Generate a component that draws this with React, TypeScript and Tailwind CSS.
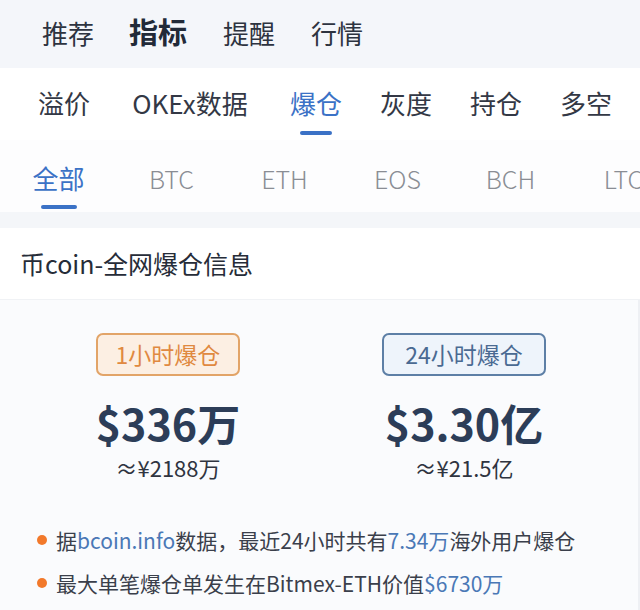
const font = { fontFamily: '"Noto Sans CJK SC", "Noto Sans", sans-serif' };

const topTabs = [
  { label: '推荐', w: 'w-[53px]' },
  { label: '指标', active: true, w: 'w-[60px]' },
  { label: '提醒', w: 'w-[54px]' },
  { label: '行情', w: 'w-[53px]' },
];

const subTabs = [
  { label: '溢价', w: 'w-[52px]' },
  { label: 'OKEx数据', w: 'w-[124px]' },
  { label: '爆仓', w: 'w-[52px]' },
  { label: '灰度', w: 'w-[52px]' },
  { label: '持仓', w: 'w-[52px]' },
  { label: '多空', w: 'w-[52px]' },
];
const coins = ['全部', 'BTC', 'ETH', 'EOS', 'BCH', 'LTC'];

export default function App() {
  return (
    <div className="w-[640px] h-[610px] overflow-hidden bg-white text-[#2f3440] font-['Noto_Sans_CJK_SC',sans-serif]">
      {/* top nav */}
      <div className="h-[68px] bg-[#f4f6fa] flex items-center pb-[4px] pl-[42px] gap-[34px] text-[26px] text-[#2d3340] whitespace-nowrap">
        {topTabs.map(t => (
          <span key={t.label} className={`${t.w} ${t.active ? 'font-bold text-[29px] text-[#222a38]' : ''}`}>{t.label}</span>
        ))}
      </div>

      {/* sub nav */}
      <div className="h-[72px] bg-white flex pl-[38px] gap-[38px] text-[26px] text-[#333845] whitespace-nowrap">
        {subTabs.map(t => (
          <div key={t.label} className={`${t.w} shrink-0 flex flex-col items-center pt-[17px]`}>
            <span className={t.label === '爆仓' ? 'text-[#3b72c6] leading-[36px]' : 'leading-[36px]'}>{t.label}</span>
            {t.label === '爆仓' && <span className="mt-[10px] w-[32px] h-[4px] rounded-full bg-[#3b72c6]" />}
          </div>
        ))}
      </div>

      {/* coin tabs */}
      <div className="h-[72px] bg-[#fdfdfe] flex pl-[2px] whitespace-nowrap">
        {coins.map((c, i) => (
          <div key={c} className="w-[113px] shrink-0 flex flex-col items-center pt-[21px]">
            <span className={i === 0 ? 'text-[26px] leading-[34px] text-[#3b72c6]' : 'text-[25px] leading-[34px] text-[#8a8d94] font-light'}>{c}</span>
            {i === 0 && <span className="mt-[10px] w-[36px] h-[4px] rounded-full bg-[#3b72c6]" />}
          </div>
        ))}
      </div>

      <div className="h-[16px] bg-[#f4f6f9]" />

      {/* title */}
      <div className="h-[72px] flex items-center pl-[20px] text-[25px] text-[#262c38] bg-white border-b border-[#f0f2f5]">
        币coin-全网爆仓信息
      </div>

      {/* card */}
      <div className="bg-[#fafbfd] border-r-2 border-[#eef0f4] h-[400px]" style={font}>
        <div className="grid grid-cols-2 w-[592px] ml-[20px] pt-[33px]">
          <div className="flex flex-col items-center">
            <div className="w-[144px] h-[43px] rounded-[7px] border-2 border-[#e2a468] bg-[#fcefe3] flex items-center justify-center text-[23px] text-[#e08940]">
              1小时爆仓
            </div>
            <div className="mt-[22px] text-[43px] leading-[48px] font-bold text-[#2c3d58]">$336万</div>
            <div className="mt-[7px] text-[22px] leading-[28px] text-[#2f3440]">≈¥2188万</div>
          </div>
          <div className="flex flex-col items-center">
            <div className="w-[164px] h-[43px] rounded-[7px] border-2 border-[#5d7fa6] bg-[#eef4fb] flex items-center justify-center text-[23px] text-[#4a6a92]">
              24小时爆仓
            </div>
            <div className="mt-[22px] text-[43px] leading-[48px] font-bold text-[#2c3d58]">$3.30亿</div>
            <div className="mt-[7px] text-[22px] leading-[28px] text-[#2f3440]">≈¥21.5亿</div>
          </div>
        </div>

        <div className="mt-[45px] pl-[37px] flex flex-col gap-[15px] text-[21px] text-[#3a3f4b] whitespace-nowrap">
          <div className="flex items-center gap-[9px] leading-[28px]">
            <span className="w-[10px] h-[10px] rounded-full bg-[#f2792b]" />
            <span>
              据<span className="text-[#4a78b6]">bcoin.info</span>数据，最近24小时共有<span className="text-[#4a78b6]">7.34万</span>海外用户爆仓
            </span>
          </div>
          <div className="flex items-center gap-[9px] leading-[28px]">
            <span className="w-[10px] h-[10px] rounded-full bg-[#f2792b]" />
            <span>
              最大单笔爆仓单发生在Bitmex-ETH价值<span className="text-[#4a78b6]">$6730万</span>
            </span>
          </div>
        </div>
      </div>
    </div>
  );
}
